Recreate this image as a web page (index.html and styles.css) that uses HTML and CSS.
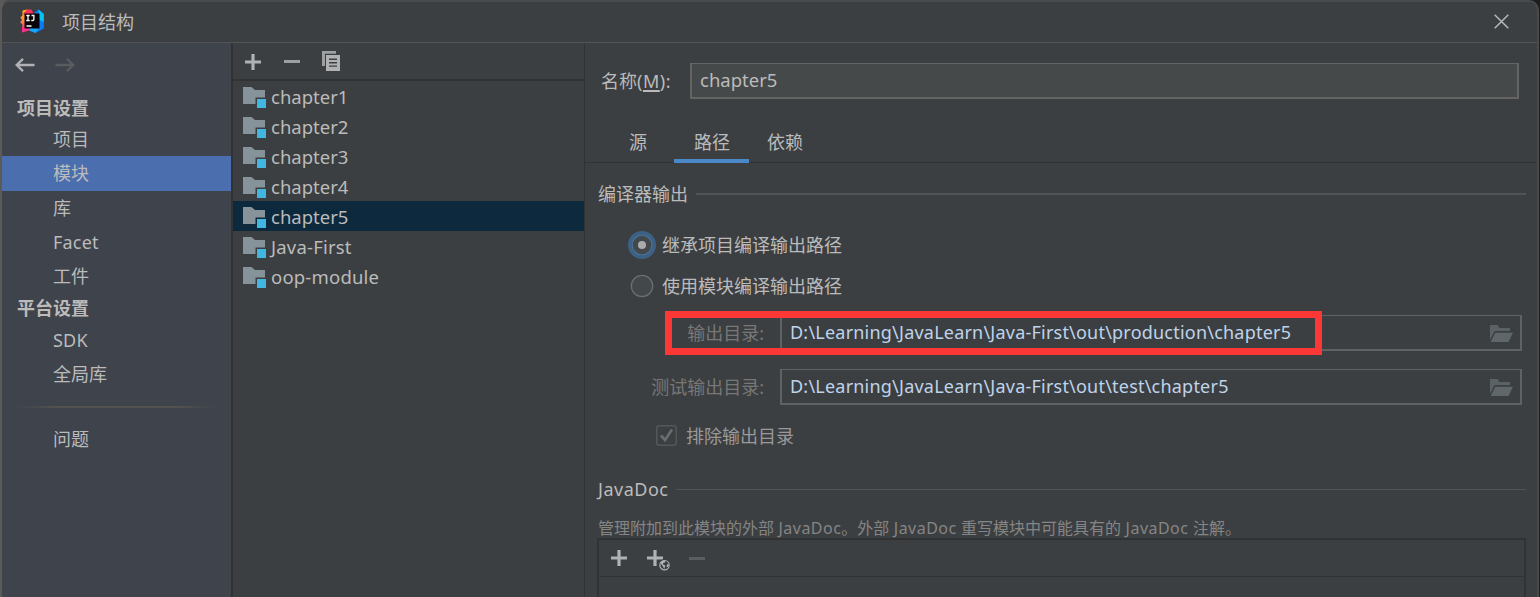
FILE: index.html
```html
<!DOCTYPE html>
<html lang="zh-CN">
<head>
<meta charset="utf-8">
<title>项目结构</title>
<link rel="stylesheet" href="styles.css">
</head>
<body>
<svg class="defs" width="0" height="0" aria-hidden="true">
  <symbol id="module" viewBox="0 0 23 21">
    <path d="M0 0h8.500l3.500 3H22v7.500h-9.500V17H0z" fill="#87939a"/>
    <path d="M14 12h9v9h-9z" fill="#40b6e0"/>
  </symbol>
  <symbol id="folder" viewBox="0 0 23 17">
    <path d="M0 0h7.500l2 3H20v3H4.500L0 15z" fill="#5b6265"/>
    <path d="M5.300 7.700H23L18.500 17H.7z" fill="#5f676a"/>
  </symbol>
  <symbol id="plus" viewBox="0 0 16 16">
    <path d="M6.400 0h3.200v6.400H16v3.200H9.600V16H6.400V9.600H0V6.400h6.400z" fill="currentColor"/>
  </symbol>
</svg>
<div class="window">
  <header class="titlebar">
    <svg class="logo" viewBox="0 0 24 24">
      <defs><linearGradient id="lg" x1="0" y1="0" x2="0" y2="1"><stop offset="0" stop-color="#fdb60d"/><stop offset=".55" stop-color="#fb8b4b"/><stop offset="1" stop-color="#fe2d8c"/></linearGradient></defs>
      <path d="M2.500 1.500L7 .5l3 2L5 21l-3-1 .5-4.500L0 13l2-1.500L.3 8l2-1z" fill="url(#lg)"/>
      <path d="M7 .5h4.500l2 4.500-6.500 2-4-2z" fill="#fe315d"/>
      <path d="M14 4l4.500-3.500L23.800 5v14.500L15.500 24l-7-4 8-15z" fill="#087cfa"/>
      <path d="M18.500 .5L23.800 5v8l-4.500-2z" fill="#07c3f2"/>
      <path d="M2 18l3-1 6 2-2 2.500-7 2z" fill="#ff318c"/>
      <path d="M10 19h9l-3.500 5-6.500-2.500z" fill="#18a6f7"/>
      <path d="M4.500 4.500h15v15h-15z" fill="#080407"/>
      <path d="M6.300 6.500h3.400M8 6.500v5M6.300 11.500h3.400M11.500 6.500h2.400v3.800q0 1.200-1.200 1.200h-1.400" fill="none" stroke="#fff" stroke-width="1.300"/>
      <path d="M6.500 17h5" stroke="#fff" stroke-width="1.300"/>
    </svg>
    <span class="title">项目结构</span>
    <svg class="close" viewBox="0 0 15 15"><path d="M.7.7l13.600 13.600M14.300.7L.7 14.300" stroke="#b5b7b8" stroke-width="1.500"/></svg>
  </header>
  <div class="body">
    <nav class="sidebar">
      <div class="history">
        <svg viewBox="0 0 20 14"><path d="M19.500 7H2M8 .9L1.700 7 8 13.100" fill="none" stroke="#afb1b3" stroke-width="2.400"/></svg>
        <svg viewBox="0 0 20 14"><path d="M.5 7H18M12 .9L18.300 7 12 13.100" fill="none" stroke="#595b5e" stroke-width="2.400"/></svg>
      </div>
      <div class="group">项目设置</div>
      <div class="item">项目</div>
      <div class="item selected">模块</div>
      <div class="item">库</div>
      <div class="item latin">Facet</div>
      <div class="item">工件</div>
      <div class="group platform">平台设置</div>
      <div class="item latin">SDK</div>
      <div class="item">全局库</div>
      <div class="separator"></div>
      <div class="item">问题</div>
    </nav>
    <section class="modules">
      <div class="toolbar">
        <svg class="plus"><use href="#plus"/></svg>
        <span class="minus"></span>
        <svg class="copy" viewBox="0 0 18 20"><path d="M0 0h14v2.700H3V15H0z" fill="#9da0a2"/><path fill-rule="evenodd" d="M4 4h14v16H4zM7 7.600v1.400h8V7.600zm0 3.400v1.400h8V11zm0 3.400v1.400h8v-1.400z" fill="#afb1b3"/></svg>
      </div>
      <div class="module"><svg><use href="#module"/></svg>chapter1</div>
      <div class="module"><svg><use href="#module"/></svg>chapter2</div>
      <div class="module"><svg><use href="#module"/></svg>chapter3</div>
      <div class="module"><svg><use href="#module"/></svg>chapter4</div>
      <div class="module current"><svg><use href="#module"/></svg>chapter5</div>
      <div class="module latin"><svg><use href="#module"/></svg>Java-First</div>
      <div class="module latin"><svg><use href="#module"/></svg>oop-module</div>
    </section>
    <main class="detail">
      <div class="name-row"><span class="name-label">名称<span>(<u>M</u>):</span></span><div class="name-input">chapter5</div></div>
      <div class="tabs"><span class="tab">源</span><span class="tab active">路径</span><span class="tab">依赖</span></div>
      <div class="heading"><span>编译器输出</span><i class="rule thick"></i></div>
      <div class="radio-row"><svg class="radio" viewBox="0 0 28 28"><circle cx="14" cy="14" r="12.200" fill="#43494a" stroke="#3d6185" stroke-width="3.600"/><circle cx="14" cy="14" r="9.900" fill="none" stroke="#48729b" stroke-width="1.200"/><circle cx="14" cy="14" r="4" fill="#a9abac"/></svg>继承项目编译输出路径</div>
      <div class="radio-row second"><svg class="radio" viewBox="0 0 28 28"><circle cx="14" cy="14" r="10.700" fill="#43494a" stroke="#6b6d6e" stroke-width="1.300"/></svg>使用模块编译输出路径</div>
      <div class="path-row"><span class="path-label">输出目录:</span><div class="path-input"><span>D:\Learning\JavaLearn\Java-First\out\production\chapter5</span><svg><use href="#folder"/></svg></div><div class="highlight"></div></div>
      <div class="path-row"><span class="path-label">测试输出目录:</span><div class="path-input"><span>D:\Learning\JavaLearn\Java-First\out\test\chapter5</span><svg><use href="#folder"/></svg></div></div>
      <div class="check-row"><svg viewBox="0 0 21 21"><rect x=".75" y=".75" width="19.500" height="19.500" rx="2.500" fill="none" stroke="#545657" stroke-width="1.500"/><path d="M5 10.500l4 4.500 7-10.500" fill="none" stroke="#6a6c6d" stroke-width="2.700"/></svg>排除输出目录</div>
      <div class="heading javadoc"><span>JavaDoc</span><i class="rule"></i></div>
      <div class="hint">管理附加到此模块的外部 <span>JavaDoc</span>。外部 <span>JavaDoc</span> 重写模块中可能具有的 <span>JavaDoc</span> 注解。</div>
      <div class="table">
        <div class="table-tools">
          <svg class="plus"><use href="#plus"/></svg>
          <svg class="plus-web" viewBox="0 0 23 21"><path d="M6.400 0h3.200v6.400H16v3.200H9.600V16H6.400V9.600H0V6.400h6.400z" fill="#afb1b3"/><circle cx="17.500" cy="15.200" r="6.300" fill="#3c3f41"/><circle cx="17.500" cy="15.200" r="4.700" fill="#3c3f41" stroke="#afb1b3" stroke-width="1.200"/><path d="M13.200 12.800l3-2.500 2.300.4-.6 1.800-2 .8.500 1.500 2 .8-1.200 3.400-1.200-2.500z M20 14.300l1.800.3-.8 2.600-1.500-.7z" fill="#afb1b3"/></svg>
          <span class="minus disabled"></span>
        </div>
      </div>
    </main>
  </div>
</div>
</body>
</html>
```

FILE: styles.css
```css
* { box-sizing: border-box; }
html, body { height: 100%; }
body {
  margin: 0;
  overflow: hidden;
  background: linear-gradient(90deg, #5a5a58 0 50%, #1e1e1e 50%);
  color: #bbbbbb;
  font: 18px/24px "Noto Sans", "Noto Sans CJK SC", sans-serif;
  font-weight: 400;
}
svg { display: block; flex: none; }
.defs { position: absolute; }
.window {
  display: flex;
  flex-direction: column;
  width: 1539px;
  height: 607px;
  border: 2px solid #494a4b;
  border-left-color: #5b5a57;
  border-radius: 10px 10px 0 0;
  background: #3c3f41;
  overflow: hidden;
}
.titlebar {
  display: flex;
  align-items: center;
  height: 41px;
  padding: 0 28px 1px 18px;
  border-bottom: 1px solid #515354;
}
.logo { width: 24px; height: 24px; margin-top: -1px; }
.title { margin-left: 18px; flex: 1; }
.close { width: 15px; height: 15px; margin-top: -1px; }
.body { display: flex; flex: 1; min-height: 0; }
.latin { letter-spacing: .2px; }

.sidebar {
  width: 231px;
  border-right: 2px solid #323232;
  background: #3e434c;
}
.history { display: flex; gap: 20px; padding: 15px 0 22px 13px; }
.history svg { width: 20px; height: 14px; }
.group { height: 28px; padding-left: 15px; line-height: 29px; font-weight: 700; }
.platform { height: 29.500px; line-height: 31px; }
.item { height: 34.300px; padding-left: 51px; line-height: 34px; }
.selected { background: #4b6eaf; }
.separator {
  height: 2px;
  margin: 14px;
  background: linear-gradient(90deg, transparent, #53524f 20%, #53524f 80%, transparent);
}

.modules { width: 352px; border-right: 1px solid #323232; }
.toolbar {
  display: flex;
  align-items: center;
  height: 38px;
  padding: 1px 0 0 12px;
  border-bottom: 2px solid #323232;
  color: #afb1b3;
}
.plus { width: 16px; height: 16px; color: #afb1b3; }
.minus { width: 16px; height: 3px; margin-left: 23px; background: #9da0a2; }
.copy { width: 18px; height: 20px; margin: -1px 0 0 22px; }
.module { display: flex; align-items: center; height: 30px; padding: 2px 0 0 10px; font-size: 18.500px; }
.module svg { width: 23px; height: 21px; margin-right: 5px; }
.current { background: #0d293e; }

.detail { flex: 1; min-width: 0; }
.name-row { display: flex; align-items: center; height: 36px; margin: 20px 18px 0 16px; }
.name-label { width: 89px; margin-top: -1px; }
.name-label span { letter-spacing: .5px; }
.name-label u { text-decoration-thickness: 2px; text-underline-offset: 2px; }
.name-input {
  flex: 1;
  height: 36px;
  padding-left: 8px;
  border: 2px solid #646464;
  border-top-width: 1px;
  background: #45494a;
  line-height: 31px;
  font-size: 18.500px;
}
.tabs { display: flex; height: 64px; padding: 23px 0 0 24px; border-bottom: 1px solid #323232; }
.tab { height: 41px; padding: 8px 18px 0 19px; }
.tab:first-child { padding: 8px 17px 0 20px; }
.tab.active { padding: 8px 19px 0 20px; margin-left: 10px; border-bottom: 4px solid #4a88c7; }
.tab.active + .tab { padding-left: 18px; }
.heading { display: flex; align-items: center; height: 24px; margin: 19px 11px 0 13px; gap: 8px; }
.rule { flex: 1; height: 1px; background: #515354; }
.rule.thick { height: 2px; }
.radio-row { display: flex; align-items: center; height: 28px; margin: 25px 0 0 43px; gap: 6px; }
.radio-row.second { margin-top: 13px; }
.radio { width: 28px; height: 28px; }
.path-row { position: relative; display: flex; align-items: center; height: 36px; margin: 15px 15px 0 0; }
.path-row + .path-row { margin-top: 18px; }
.path-label { width: 179px; margin: -1px 16px 0 0; text-align: right; color: #777777; }
.path-input {
  display: flex;
  align-items: center;
  justify-content: space-between;
  flex: 1;
  height: 36px;
  padding: 0 7px 0 8px;
  border: 2px solid #5f6162;
  border-top-width: 1px;
  color: #bfd3ea;
}
.path-input span { margin-top: -2px; letter-spacing: .215px; }
.path-input svg { width: 23px; height: 17px; margin-top: 1px; }
.highlight { position: absolute; left: 80px; top: -4px; width: 657px; height: 44px; border: 7px solid #fc3836; }
.check-row { display: flex; align-items: center; height: 24px; margin: 19px 0 0 71px; gap: 9px; color: #999999; }
.check-row svg { width: 21px; height: 21px; margin-top: -1px; }
.javadoc { margin-top: 29px; gap: 8px; }
.javadoc span { letter-spacing: .5px; }
.hint { height: 24px; margin: 15px 0 0 13px; color: #858585; font-size: 16px; white-space: nowrap; word-spacing: .3px; }
.hint span { letter-spacing: .48px; }
.table { height: 80px; margin: -2px 11px 0 12px; border: 2px solid #323232; }
.table-tools { display: flex; align-items: center; height: 37px; padding-left: 12px; border-bottom: 1px solid #323232; }
.plus-web { width: 23px; height: 21px; margin: 5px 0 0 20px; }
.disabled { margin-left: 19px; background: #5b5d5e; }
```
